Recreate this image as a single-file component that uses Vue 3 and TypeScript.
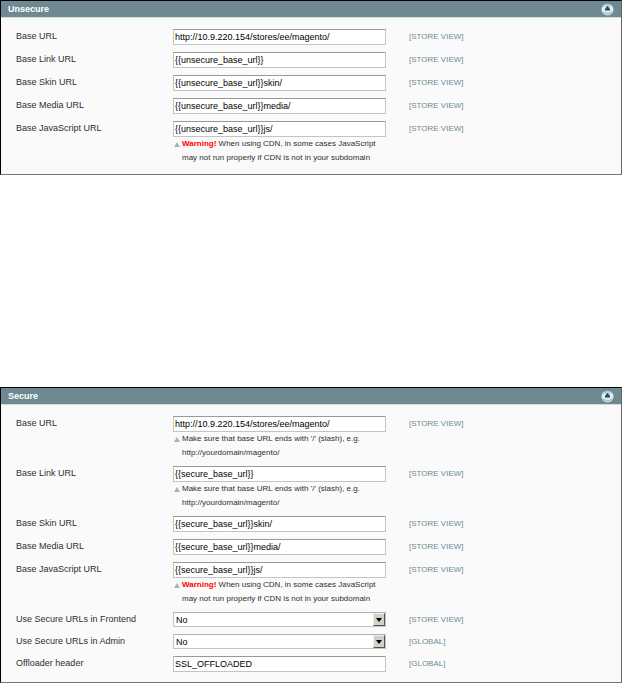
<script setup lang="ts">
import { reactive } from 'vue'

interface Field {
  id: string
  label: string
  value: string
  scope: string
  options?: string[]
  warning?: string
  hint?: string[]
}

interface Section {
  id: string
  title: string
  open: boolean
  fields: Field[]
}

const cdnHint = ['When using CDN, in some cases JavaScript', 'may not run properly if CDN is not in your subdomain']
const slashHint = ["Make sure that base URL ends with '/' (slash), e.g.", 'http://yourdomain/magento/']

const sections = reactive<Section[]>([
  {
    id: 'unsecure',
    title: 'Unsecure',
    open: true,
    fields: [
      { id: 'base', label: 'Base URL', value: 'http://10.9.220.154/stores/ee/magento/', scope: '[STORE VIEW]' },
      { id: 'link', label: 'Base Link URL', value: '{{unsecure_base_url}}', scope: '[STORE VIEW]' },
      { id: 'skin', label: 'Base Skin URL', value: '{{unsecure_base_url}}skin/', scope: '[STORE VIEW]' },
      { id: 'media', label: 'Base Media URL', value: '{{unsecure_base_url}}media/', scope: '[STORE VIEW]' },
      { id: 'js', label: 'Base JavaScript URL', value: '{{unsecure_base_url}}js/', scope: '[STORE VIEW]', warning: 'Warning!', hint: cdnHint },
    ],
  },
  {
    id: 'secure',
    title: 'Secure',
    open: true,
    fields: [
      { id: 'base', label: 'Base URL', value: 'http://10.9.220.154/stores/ee/magento/', scope: '[STORE VIEW]', hint: slashHint },
      { id: 'link', label: 'Base Link URL', value: '{{secure_base_url}}', scope: '[STORE VIEW]', hint: slashHint },
      { id: 'skin', label: 'Base Skin URL', value: '{{secure_base_url}}skin/', scope: '[STORE VIEW]' },
      { id: 'media', label: 'Base Media URL', value: '{{secure_base_url}}media/', scope: '[STORE VIEW]' },
      { id: 'js', label: 'Base JavaScript URL', value: '{{secure_base_url}}js/', scope: '[STORE VIEW]', warning: 'Warning!', hint: cdnHint },
      { id: 'frontend', label: 'Use Secure URLs in Frontend', value: 'No', scope: '[STORE VIEW]', options: ['Yes', 'No'] },
      { id: 'admin', label: 'Use Secure URLs in Admin', value: 'No', scope: '[GLOBAL]', options: ['Yes', 'No'] },
      { id: 'offloader', label: 'Offloader header', value: 'SSL_OFFLOADED', scope: '[GLOBAL]' },
    ],
  },
])
</script>

<template>
  <main class="config">
    <section v-for="section in sections" :key="section.id" class="panel">
      <header class="panel-head">
        <h2 class="title">{{ section.title }}</h2>
        <button class="toggle" type="button" :aria-label="section.title" :aria-expanded="section.open" @click="section.open = !section.open">
          <svg viewBox="0 0 13 13" width="13" height="13" aria-hidden="true">
            <defs>
              <linearGradient :id="`${section.id}-disc`" x1="0" y1="0" x2="0" y2="1">
                <stop offset="0" stop-color="#a3bac2" />
                <stop offset="0.4" stop-color="#e6f0f3" />
                <stop offset="1" stop-color="#cfdde2" />
              </linearGradient>
            </defs>
            <circle cx="6.5" cy="6.5" r="6" :fill="`url(#${section.id}-disc)`" />
            <path d="M2 9.2Q6.5 12.4 11 9.2" fill="none" stroke="#8fa9b3" stroke-width="0.8" />
            <path d="M6.5 2.8L9 6V7.5H4V6Z" fill="#234f60" />
          </svg>
        </button>
      </header>
      <div v-if="section.open" class="fields">
        <div v-for="field in section.fields" :key="field.id" class="row">
          <label class="label" :for="`${section.id}-${field.id}`">{{ field.label }}</label>
          <div class="control">
            <div v-if="field.options" class="select-wrap">
              <select :id="`${section.id}-${field.id}`" v-model="field.value" class="select">
                <option v-for="option in field.options" :key="option">{{ option }}</option>
              </select>
              <span class="arrow" aria-hidden="true">
                <svg viewBox="0 0 6 4" width="6" height="4"><path d="M0 0H6L3 4Z" fill="#000" /></svg>
              </span>
            </div>
            <input v-else :id="`${section.id}-${field.id}`" v-model="field.value" class="input" type="text" />
            <p v-if="field.hint" class="hint">
              <svg class="marker" viewBox="0 0 6 5" width="6" height="5" aria-hidden="true"><path d="M3 0L6 5H0Z" fill="#a3b5bb" /></svg>
              <span>
                <span v-for="(line, i) in field.hint" :key="line" class="line"><strong v-if="i === 0 && field.warning" class="warning">{{ field.warning }}</strong>{{ i === 0 && field.warning ? ' ' : '' }}{{ line }}</span>
              </span>
            </p>
          </div>
          <span class="scope">{{ field.scope }}</span>
        </div>
      </div>
    </section>
  </main>
</template>

<style scoped>
.config {
  display: flex;
  flex-direction: column;
  gap: 212px;
  font-family: "Liberation Sans", Arial, sans-serif;
  font-size: 9px;
  color: #2f2f2f;
}

.panel {
  border: 1px solid #000;
  border-right-color: #666;
  border-bottom-color: #777;
  background: #fafafa;
}

.panel-head {
  display: flex;
  align-items: center;
  justify-content: space-between;
  height: 16px;
  padding: 0 7px;
  border-bottom: 1px solid #d4dadd;
  background: #6f8992;
}

.title {
  margin: 0;
  font-size: 9px;
  line-height: 16px;
  color: #fff;
}

.toggle {
  display: flex;
  padding: 0;
  border: 0;
  background: none;
  cursor: pointer;
}

.fields {
  padding: 11px 15px 3px;
}

.row {
  display: grid;
  grid-template-columns: 157px minmax(0, 213px) 1fr;
  align-items: start;
  padding-bottom: 7px;
}

.label {
  line-height: 15px;
}

.control {
  min-width: 0;
}

.input,
.select {
  display: block;
  box-sizing: border-box;
  width: 100%;
  height: 16px;
  margin: 0;
  padding: 0 1px;
  border: 1px solid #c4c4c4;
  border-top-color: #999;
  border-radius: 0;
  background: #fff;
  font-family: inherit;
  font-size: 9px;
  color: #000;
}

.select-wrap {
  position: relative;
}

.select {
  height: 15px;
  padding-left: 2px;
  border-top-color: #b0b0b0;
  appearance: none;
}

.arrow {
  position: absolute;
  top: 1px;
  right: 1px;
  bottom: 1px;
  display: flex;
  box-sizing: border-box;
  width: 12px;
  align-items: center;
  justify-content: center;
  border: 1px solid #f0f0ee;
  border-right-color: #555;
  border-bottom-color: #555;
  background: #d4d0c8;
  pointer-events: none;
}

.hint {
  display: flex;
  gap: 2px;
  margin: 0 0 -1px 1px;
  font-size: 8px;
  line-height: 14px;
  white-space: nowrap;
}

.marker {
  flex: none;
  margin-top: 5px;
}

.line {
  display: block;
}

.warning {
  color: #f00;
}

.scope {
  padding-left: 23px;
  font-size: 8px;
  line-height: 15px;
  color: #6f8992;
}
</style>
